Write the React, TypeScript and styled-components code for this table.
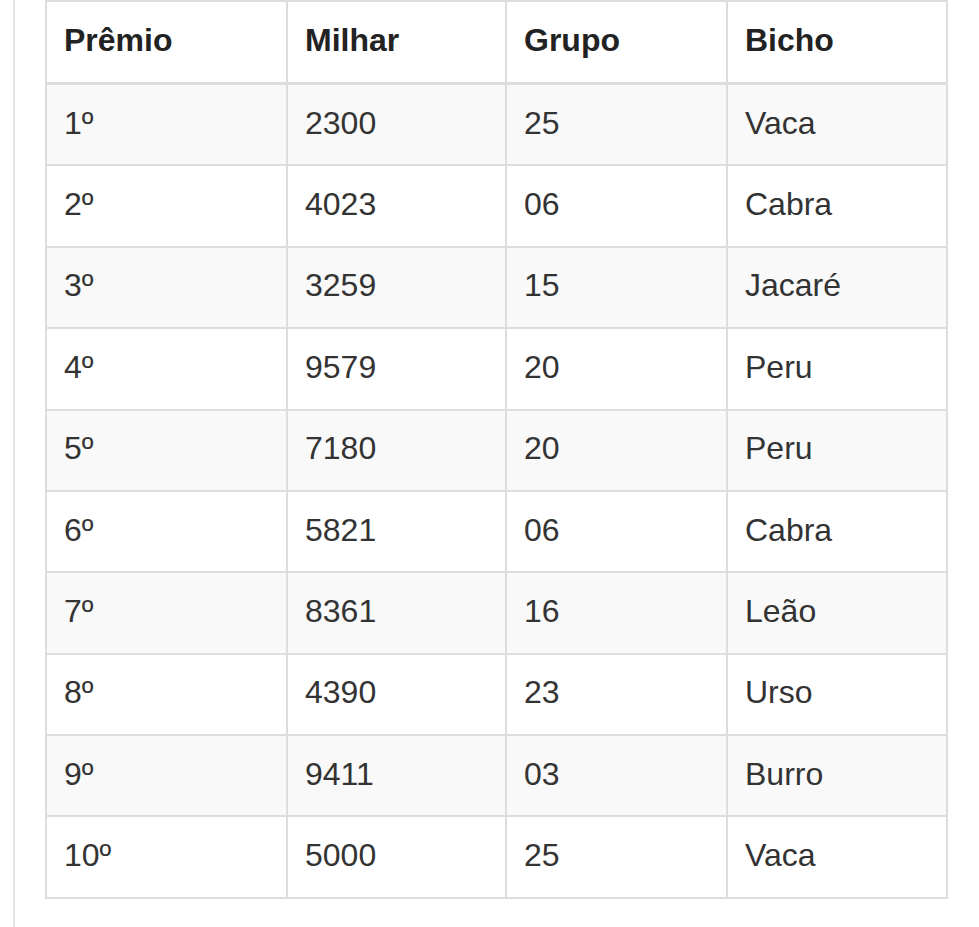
import styled, { createGlobalStyle } from 'styled-components';

const GlobalStyle = createGlobalStyle`
  html, body {
    margin: 0;
    padding: 0;
    background: #ffffff;
  }
  body {
    font-family: "Liberation Sans", Arial, Helvetica, sans-serif;
    color: #333333;
  }
`;

const Page = styled.div`
  min-height: 927px;
  padding-left: 13px;
  box-sizing: border-box;
`;

const Content = styled.div`
  min-height: 927px;
  border-left: 2px solid #e4e4e4;
  padding-left: 30px;
  box-sizing: border-box;
`;

const Table = styled.table`
  width: 901px;
  table-layout: fixed;
  border-collapse: collapse;
  border: 2px solid #dddddd;
  font-size: 32px;
  line-height: 46px;
`;

const HeadCell = styled.th`
  text-align: left;
  font-weight: 700;
  padding: 14.5px 17px 19.5px 17px;
  border: 2px solid #dddddd;
  border-bottom-width: 3px;
  color: #222222;
`;

const Row = styled.tr<{ $striped: boolean }>`
  background: ${(p) => (p.$striped ? '#f9f9f9' : '#ffffff')};
`;

const Cell = styled.td`
  padding: 14.7px 17px 18.7px 17px;
  border: 2px solid #dddddd;
  color: #333333;
`;

const RESULTS = [
  ['1º', '2300', '25', 'Vaca'],
  ['2º', '4023', '06', 'Cabra'],
  ['3º', '3259', '15', 'Jacaré'],
  ['4º', '9579', '20', 'Peru'],
  ['5º', '7180', '20', 'Peru'],
  ['6º', '5821', '06', 'Cabra'],
  ['7º', '8361', '16', 'Leão'],
  ['8º', '4390', '23', 'Urso'],
  ['9º', '9411', '03', 'Burro'],
  ['10º', '5000', '25', 'Vaca'],
];

export default function App() {
  return (
    <>
      <GlobalStyle />
      <Page>
        <Content>
          <Table>
            <colgroup>
              <col style={{ width: 241 }} />
              <col style={{ width: 219 }} />
              <col style={{ width: 221 }} />
              <col style={{ width: 220 }} />
            </colgroup>
            <thead>
              <tr>
                <HeadCell>Prêmio</HeadCell>
                <HeadCell>Milhar</HeadCell>
                <HeadCell>Grupo</HeadCell>
                <HeadCell>Bicho</HeadCell>
              </tr>
            </thead>
            <tbody>
              {RESULTS.map((r, i) => (
                <Row key={i} $striped={i % 2 === 0}>
                  {r.map((v, j) => (
                    <Cell key={j}>{v}</Cell>
                  ))}
                </Row>
              ))}
            </tbody>
          </Table>
        </Content>
      </Page>
    </>
  );
}
